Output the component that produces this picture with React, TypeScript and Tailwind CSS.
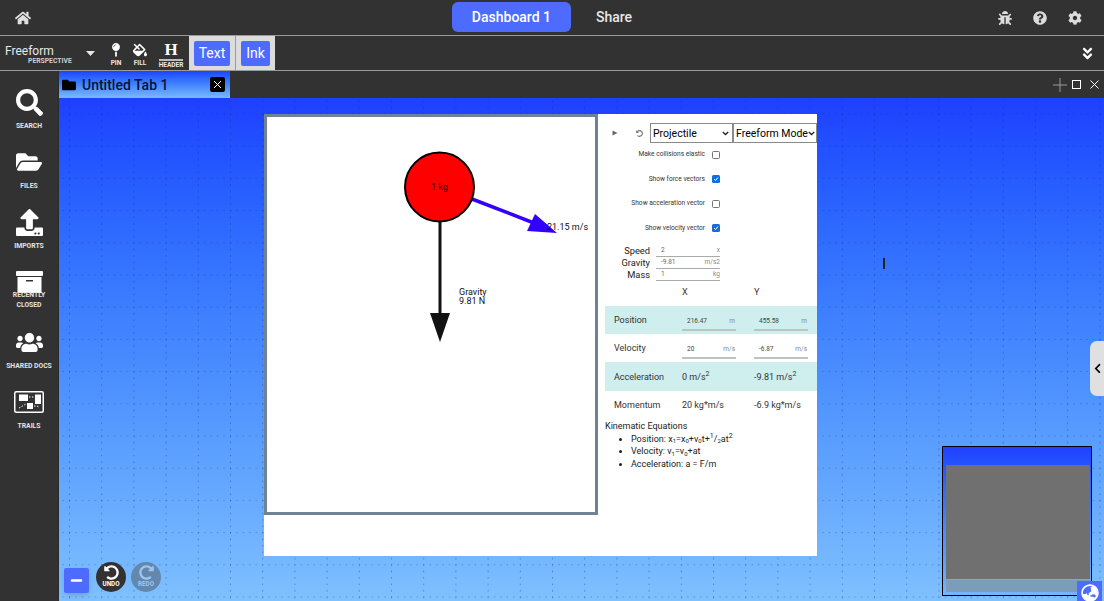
import React from "react";
import {
  FaHome, FaBug, FaQuestionCircle, FaCog, FaAngleDoubleDown, FaMapPin, FaFillDrip, FaSearch,
  FaFolderOpen, FaFolder, FaUpload, FaUsers, FaUndoAlt, FaRedoAlt, FaGlobeAsia, FaChevronLeft, FaMinus,
} from "react-icons/fa";

const font = { fontFamily: "Roboto, 'Liberation Sans', sans-serif" };

function TrailsIcon() {
  return (
    <svg width="30" height="22" viewBox="0 0 30 22">
      <rect x="0.75" y="0.75" width="28.5" height="20.5" rx="1.5" fill="#333" stroke="#fff" strokeWidth="1.5" />
      <rect x="5" y="3.5" width="9" height="6.5" fill="#fff" />
      <rect x="21" y="3.5" width="6" height="9.5" fill="#fff" />
      <rect x="13" y="12" width="6" height="6" fill="#fff" />
      <path d="M15 6h5M5 17l7-4M20 15h3l2 1" stroke="#fff" strokeWidth="1" strokeDasharray="1.5 1.5" fill="none" />
    </svg>
  );
}

function ArchiveIcon() {
  return (
    <svg width="27" height="22" viewBox="0 0 27 22">
      <rect x="0" y="0" width="27" height="5" rx="1" fill="#fff" />
      <rect x="1.5" y="6" width="24" height="16" fill="#fff" />
      <rect x="10" y="9" width="7" height="1.5" fill="#333" />
    </svg>
  );
}

function SideItem({ icon, label, second }: { icon: React.ReactNode; label: string; second?: string }) {
  return (
    <div className="h-[60px] flex flex-col items-center">
      <div className="h-[32px] flex items-center justify-center text-white">{icon}</div>
      <div className={`text-[6.8px] leading-[10px] font-bold text-[#e4e4e4] text-center whitespace-nowrap ${second ? "-mt-[8px] relative" : "mt-[3px]"}`}>
        {label}
        {second && <div>{second}</div>}
      </div>
    </div>
  );
}

function ToolIcon({ icon, label, width, underlined }: { icon: React.ReactNode; label: string; width: string; underlined?: boolean }) {
  return (
    <div className={`flex flex-col items-center text-white shrink-0 ${width}`}>
      <div className="h-[16px] flex items-end justify-center">{icon}</div>
      <div className={`text-[6.5px] mt-[2px] font-bold text-[#e8e8e8] ${underlined ? "border-t-2 border-[#bdbdbd] leading-[8px]" : "leading-[9px]"}`}>{label}</div>
    </div>
  );
}

function Check({ label, checked }: { label: string; checked?: boolean }) {
  return (
    <div className="h-[24.5px] flex items-center justify-end w-[122px]">
      <span className="text-[6.6px] text-[#333] whitespace-nowrap mr-[7px]">{label}</span>
      {checked ? (
        <span className="w-[8px] h-[8px] rounded-[1.5px] bg-[#0f6fdc] flex items-center justify-center shrink-0">
          <svg width="6" height="6" viewBox="0 0 6 6"><path d="M1 3l1.5 1.5L5 1.5" stroke="#fff" strokeWidth="1" fill="none" /></svg>
        </span>
      ) : (
        <span className="w-[8px] h-[8px] rounded-[1.5px] border border-[#767676] bg-white shrink-0" />
      )}
    </div>
  );
}

function Param({ label, value, unit }: { label: string; value: string; unit: string }) {
  return (
    <div className="flex items-center h-[12px]">
      <span className="w-[52px] text-right text-[9.3px] leading-[12px] text-[#222]">{label}</span>
      <div className="ml-[6px] w-[64px] h-[12px] border-b border-[#aaa] flex justify-between items-center pl-[5px] text-[6.5px] text-[#666]">
        <span>{value}</span>
        <span className="text-[#888]">{unit}</span>
      </div>
    </div>
  );
}

function Cell({ value, unit }: { value: string; unit: string }) {
  return (
    <div className="w-[54px] h-[15px] border-b-2 border-[#b9c4c4] flex items-center justify-between text-[6.5px] pl-[5px] pr-[1px] mt-[4px]">
      <span className="text-[#444]">{value}</span>
      <span className="text-[#888]">{unit}</span>
    </div>
  );
}

function Row({ label, tint, a, b, height }: { label: string; tint?: boolean; a: React.ReactNode; b: React.ReactNode; height: string }) {
  return (
    <div className={`flex items-center pt-[2px] text-[9px] text-[#333] ${height} ${tint ? "bg-[#cfeeee]" : ""}`}>
      <span className="w-[77px] pl-[9px]">{label}</span>
      <div className="w-[72px]">{a}</div>
      <div>{b}</div>
    </div>
  );
}

function Selects() {
  return (
    <div className="flex items-center h-[20px] mt-[9px]">
      <svg width="6" height="6" viewBox="0 0 6 6" className="ml-[14px]"><path d="M0.5 0.5L5.5 3L0.5 5.5z" fill="#666" /></svg>
      <span className="ml-[18px] w-[7px] h-[8px] flex items-center text-[#777]"><FaUndoAlt size={7} /></span>
      <div className="ml-[7px] w-[83px] h-[20px] border border-[#8a8a8a] flex items-center justify-between pl-[2px] pr-[3px] pt-[1px] text-[10.5px] text-black">
        Projectile
        <svg width="7" height="5" viewBox="0 0 7 5"><path d="M0.8 1l2.7 2.5L6.2 1" stroke="#222" strokeWidth="1.3" fill="none" /></svg>
      </div>
      <div className="w-[84px] h-[20px] border border-[#8a8a8a] flex items-center justify-between pl-[2px] pr-[1px] pt-[1px] text-[10.5px] text-black whitespace-nowrap">
        Freeform Mode
        <svg width="7" height="5" viewBox="0 0 7 5" className="shrink-0"><path d="M0.8 1l2.7 2.5L6.2 1" stroke="#222" strokeWidth="1.3" fill="none" /></svg>
      </div>
    </div>
  );
}

function Simulation() {
  return (
    <div className="w-[334px] h-[401px] border-[3px] border-[#6f8296] relative shrink-0 bg-white">
      <svg width="328" height="395" viewBox="0 0 328 395" className="absolute inset-0">
        <path d="M173 104V200" stroke="#111" strokeWidth="3" />
        <path d="M163 196H183L173 225z" fill="#111" />
        <path d="M205 82L272 108" stroke="#3300ff" strokeWidth="3.5" />
        <path d="M268 97L260 114L290 116z" fill="#3300ff" />
        <circle cx="172.5" cy="70" r="34.5" fill="#ff0000" stroke="#000" strokeWidth="2" />
      </svg>
      <span className="absolute left-[164px] top-[64px] text-[9px] leading-[12px] text-[#111] whitespace-nowrap">1 kg</span>
      <span className="absolute left-[280px] top-[105px] text-[9px] leading-[11px] text-[#111] whitespace-nowrap">21.15 m/s</span>
      <div className="absolute left-[192px] top-[171px] text-[9px] leading-[9px] text-[#111]">Gravity<br />9.81 N</div>
    </div>
  );
}

function Panel() {
  return (
    <div className="w-[219px] flex flex-col">
      <Selects />
      <div className="flex flex-col items-start -mt-[0.3px]">
        <Check label="Make collisions elastic" />
        <Check label="Show force vectors" checked />
        <Check label="Show acceleration vector" />
        <Check label="Show velocity vector" checked />
      </div>
      <div className="mt-[4.3px] flex flex-col">
        <Param label="Speed" value="2" unit="x" />
        <Param label="Gravity" value="-9.81" unit="m/s2" />
        <Param label="Mass" value="1" unit="kg" />
      </div>
      <div className="ml-[7px] h-[25px] pb-[2px] flex items-center text-[9px] text-[#333]">
        <span className="w-[77px]" />
        <span className="w-[72px]">X</span>
        <span>Y</span>
      </div>
      <div className="ml-[7px] w-[212px]">
        <Row label="Position" tint height="h-[28px]" a={<Cell value="216.47" unit="m" />} b={<Cell value="455.58" unit="m" />} />
        <Row label="Velocity" height="h-[28px]" a={<Cell value="20" unit="m/s" />} b={<Cell value="-6.87" unit="m/s" />} />
        <Row label="Acceleration" tint height="h-[29px]" a={<span>0 m/s<sup className="text-[7px]">2</sup></span>} b={<span>-9.81 m/s<sup className="text-[7px]">2</sup></span>} />
        <Row label="Momentum" height="h-[28px]" a="20 kg*m/s" b="-6.9 kg*m/s" />
      </div>
      <div className="ml-[7px] mt-[1px] text-[9px] leading-[12.5px] text-[#222]">
        Kinematic Equations
        <ul className="list-disc ml-[26px]">
          <li>Position: x<sub className="text-[6px]">1</sub>=x<sub className="text-[6px]">0</sub>+v<sub className="text-[6px]">0</sub>t+<sup className="text-[7px]">1</sup>/<sub className="text-[6px]">2</sub>at<sup className="text-[7px]">2</sup></li>
          <li>Velocity: v<sub className="text-[6px]">1</sub>=v<sub className="text-[6px]">0</sub>+at</li>
          <li>Acceleration: a = F/m</li>
        </ul>
      </div>
    </div>
  );
}

function Grid() {
  return (
    <svg className="absolute inset-0 w-full h-full" aria-hidden="true">
      <defs>
        <pattern id="dots" x="10" y="15.5" width="32.2" height="32.2" patternUnits="userSpaceOnUse">
          <path d="M0.5 0V32.2" stroke="#14257a" strokeOpacity="0.4" strokeWidth="1" strokeDasharray="1.5 4.94" />
          <path d="M0 0.5H32.2" stroke="#14257a" strokeOpacity="0.4" strokeWidth="1" strokeDasharray="1.2 5.24" />
        </pattern>
      </defs>
      <rect width="100%" height="100%" fill="url(#dots)" />
    </svg>
  );
}

export default function App() {
  return (
    <div className="w-[1104px] h-[601px] flex flex-col overflow-hidden bg-[#323232]" style={font}>
      <header className="h-[36px] shrink-0 border-b border-[#9a9a9a] flex items-center relative pl-[15px] pr-[22px]">
        <FaHome size={16} className="text-[#e0e0e0]" />
        <div className="flex-1 flex items-center justify-center gap-[25px] pl-[55px] pb-[1px]">
          <div className="w-[119px] h-[30px] rounded-[6px] bg-[#4d6cff] text-white text-[14px] font-medium flex items-center justify-center">Dashboard 1</div>
          <span className="text-[#e8e8e8] text-[14px] font-medium">Share</span>
        </div>
        <div className="flex items-center gap-[21px] text-[#dcdcdc]">
          <FaBug size={14} />
          <FaQuestionCircle size={14} />
          <FaCog size={14} />
        </div>
      </header>
      <div className="h-[35px] shrink-0 border-b border-[#9a9a9a] flex items-stretch pl-[5px] pr-[9px]">
        <div className="w-[91px] relative text-[12px] text-[#e8e8e8] pt-[7px] leading-[17px]">
          Freeform
          <span className="absolute left-[23px] top-[21px] text-[6.8px] leading-[9px] font-bold text-[#cfcfcf] whitespace-nowrap">PERSPECTIVE</span>
          <svg width="9" height="5" viewBox="0 0 9 5" className="absolute left-[81px] top-[15px]"><path d="M0 0H9L4.5 5z" fill="#e8e8e8" /></svg>
        </div>
        <div className="flex items-start pt-[5px] w-[93px] pl-[12px]">
          <ToolIcon width="w-[16px]" icon={<FaMapPin size={14} />} label="PIN" />
          <ToolIcon width="w-[16px] ml-[8px]" icon={<FaFillDrip size={14} />} label="FILL" />
          <ToolIcon width="w-[28px] ml-[9px]" icon={<span className="text-[17px] leading-[15px] font-bold" style={{ fontFamily: "'Liberation Serif', serif" }}>H</span>} label="HEADER" underlined />
        </div>
        <div className="w-[47px] bg-[#dcdcdc] flex items-center justify-center border-r border-[#9a9a9a]">
          <div className="w-[36px] h-[25px] rounded-[2px] bg-[#4d6cff] text-white text-[14px] flex items-center justify-center">Text</div>
        </div>
        <div className="w-[39px] bg-[#dcdcdc] flex items-center justify-center">
          <div className="w-[29px] h-[25px] rounded-[2px] bg-[#4d6cff] text-white text-[14px] flex items-center justify-center">Ink</div>
        </div>
        <div className="flex-1 flex items-center justify-end">
          <FaAngleDoubleDown size={15} className="text-white" />
        </div>
      </div>
      <div className="flex-1 flex min-h-0">
        <aside className="w-[59px] shrink-0 border-r border-[#2a2a2a] pt-[15px] flex flex-col">
          <SideItem icon={<FaSearch size={27} />} label="SEARCH" />
          <SideItem icon={<FaFolderOpen size={26} />} label="FILES" />
          <SideItem icon={<FaUpload size={27} />} label="IMPORTS" />
          <SideItem icon={<ArchiveIcon />} label="RECENTLY" second="CLOSED" />
          <SideItem icon={<FaUsers size={27} />} label="SHARED DOCS" />
          <SideItem icon={<TrailsIcon />} label="TRAILS" />
        </aside>
        <main className="flex-1 flex flex-col min-w-0">
          <div className="h-[27px] shrink-0 flex items-stretch">
            <div className="w-[171px] bg-gradient-to-b from-[#2040ff] to-[#79b8ff] flex items-center pl-[3px] pr-[5px]">
              <FaFolder size={14} className="text-black" />
              <span className="ml-[6px] pt-[1px] text-[14px] font-medium text-[#06123a]">Untitled Tab 1</span>
              <span className="ml-auto w-[15px] h-[15px] rounded-[2px] bg-black flex items-center justify-center">
                <svg width="9" height="9" viewBox="0 0 9 9"><path d="M1 1l7 7M8 1l-7 7" stroke="#fff" strokeWidth="1" /></svg>
              </span>
            </div>
            <div className="flex-1 flex items-center justify-end pr-[5px]">
              <svg width="14" height="14" viewBox="0 0 14 14"><path d="M7 0V14M0 7H14" stroke="#999" strokeWidth="1" /></svg>
              <span className="ml-[5px] w-[9px] h-[9px] border-[1.5px] border-white" />
              <svg width="9" height="9" viewBox="0 0 9 9" className="ml-[9px]"><path d="M0.5 0.5l8 8M8.5 0.5l-8 8" stroke="#fff" strokeWidth="1" /></svg>
            </div>
          </div>
          <div className="flex-1 relative overflow-hidden bg-gradient-to-b from-[#1f3fff] to-[#7fc0ff]">
            <Grid />
            <div className="absolute left-[205px] top-[16px] w-[553px] h-[442px] bg-white flex items-start">
              <Simulation />
              <Panel />
            </div>
            <span className="absolute left-[824px] top-[160px] w-[2px] h-[11px] bg-[#222]" />
            <div className="absolute right-0 top-[243px] w-[14px] h-[55px] bg-[#e0e0e0] rounded-l-[7px] flex items-center justify-center pl-[1px]">
              <FaChevronLeft size={11} className="text-black" />
            </div>
            <div className="absolute left-[883px] top-[348px] w-[150px] h-[150px] border border-black bg-gradient-to-b from-[#2040ff] to-[#78b4ff] overflow-hidden">
              <div className="absolute left-[3px] top-[18px] w-[144px] h-[114px] bg-[#707070]" />
              <div className="absolute left-[3px] top-[133px] w-[144px] h-[12px] bg-[#7c9cbc]" />
            </div>
            <div className="absolute left-[1018px] top-[483px] w-[25px] h-[20px] bg-[#4d6cff] flex items-start justify-center pt-[3px]">
              <FaGlobeAsia size={18} className="text-white" />
            </div>
            <div className="absolute left-[5px] bottom-[9px] flex items-end gap-[7px]">
              <div className="w-[25px] h-[25px] rounded-[2px] bg-[#4d6cff] shadow-md flex items-center justify-center text-white -mb-[1px]">
                <FaMinus size={13} />
              </div>
              <div className="w-[30px] h-[30px] rounded-full bg-[#323232] flex flex-col items-center pt-[3px] text-white">
                <FaUndoAlt size={15} />
                <span className="text-[6.3px] leading-[8px] font-bold">UNDO</span>
              </div>
              <div className="w-[30px] h-[30px] rounded-full bg-[#6487ad] flex flex-col items-center pt-[3px] text-[#a0c4f0] -ml-[2px]">
                <FaRedoAlt size={15} />
                <span className="text-[6.3px] leading-[8px] font-bold">REDO</span>
              </div>
            </div>
          </div>
        </main>
      </div>
    </div>
  );
}
